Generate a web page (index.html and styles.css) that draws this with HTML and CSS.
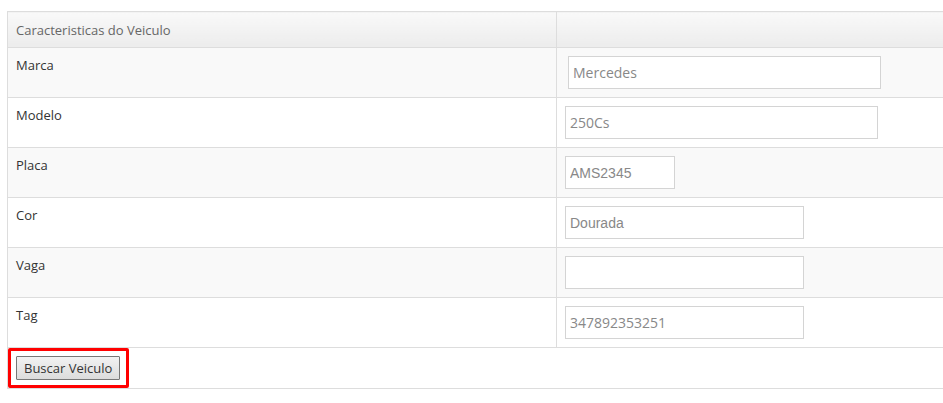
FILE: index.html
```html
<!DOCTYPE html>
<html lang="pt">

<head>
    <meta charset="UTF-8">
    <meta name="viewport" content="width=device-width, initial-scale=1.0">
    <title>Veiculo</title>
    <link rel="stylesheet" href="styles.css">
</head>

<body>

    <table class="grid">
        <thead>
            <tr>
                <th>Caracteristicas do Veiculo</th>
                <th></th>
            </tr>
        </thead>
        <tbody>
            <tr>
                <td>Marca</td>
                <td><input type="text" class="field wide shifted" value="Mercedes"></td>
            </tr>
            <tr>
                <td>Modelo</td>
                <td><input type="text" class="field wide" value="250Cs"></td>
            </tr>
            <tr>
                <td>Placa</td>
                <td><input type="text" class="field short arial" value="AMS2345"></td>
            </tr>
            <tr>
                <td>Cor</td>
                <td><input type="text" class="field mid arial" value="Dourada"></td>
            </tr>
            <tr>
                <td>Vaga</td>
                <td><input type="text" class="field mid" value=""></td>
            </tr>
            <tr>
                <td>Tag</td>
                <td><input type="text" class="field mid" value="347892353251"></td>
            </tr>
            <tr class="actions">
                <td colspan="2">
                    <span class="highlight"><button class="btn">Buscar Veiculo</button></span>
                </td>
            </tr>
        </tbody>
    </table>

</body>

</html>
```

FILE: styles.css
```css
body {
    margin: 0;
    padding: 11px 0 0 7px;
    font-family: "Open Sans", Arial, sans-serif;
    font-size: 13px;
    color: #333;
    background: #fff;
    overflow: hidden;
}

.grid {
    border-collapse: collapse;
    width: 1100px;
    table-layout: fixed;
    border-top: 1px solid #ddd;
    border-left: 1px solid #ddd;
}

.grid th,
.grid td {
    border-bottom: 1px solid #ddd;
    text-align: left;
    vertical-align: top;
}

.grid th:first-child,
.grid td:first-child {
    width: 532px;
    border-right: 1px solid #ddd;
}

.grid th {
    height: 35px;
    padding: 0 8px;
    vertical-align: middle;
    font-weight: normal;
    font-size: 13px;
    color: #666;
    background: linear-gradient(#f9f9f9, #ececec);
}

.grid td {
    height: 33px;
    padding: 8px 8px 8px 8px;
    line-height: 20px;
}

.grid td:first-child {
    padding-top: 7px;
}

.grid tbody tr:nth-child(odd) td {
    background: #f9f9f9;
}

.grid tbody tr.actions td {
    background: #fff;
    height: auto;
    padding: 0 0 0 0;
    border-right: none;
}

.field {
    box-sizing: border-box;
    height: 33px;
    margin: 0;
    padding: 0 4px;
    border: 1px solid #d4d4d4;
    background: #fff;
    font-family: "Open Sans", Arial, sans-serif;
    font-size: 14px;
    color: #888;
    outline: none;
}

.arial {
    font-family: "Liberation Sans", Arial, sans-serif;
}

.wide {
    width: 313px;
}

.shifted {
    margin-left: 3px;
}

.short {
    width: 110px;
}

.mid {
    width: 239px;
}

.highlight {
    display: inline-block;
    padding: 5px 6px 5px 5px;
    border: 3px solid #f00;
    border-radius: 2px;
    line-height: 0;
}

.btn {
    height: 24px;
    padding: 0 7px;
    font-family: "Open Sans", Arial, sans-serif;
    font-size: 13px;
    color: #333;
    background: linear-gradient(#f2f2f2, #dcdcdc);
    border: 1px solid #777;
    border-radius: 1px;
    cursor: pointer;
}
```
